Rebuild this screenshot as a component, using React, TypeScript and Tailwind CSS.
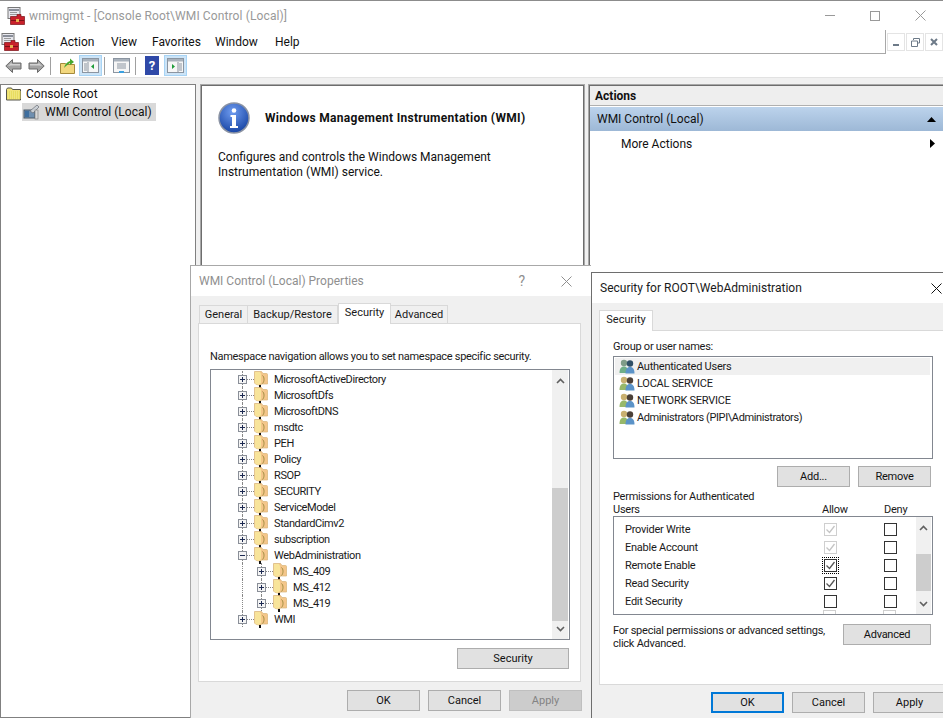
import type { ReactNode } from "react"

const uiFont = "font-['Roboto','Liberation_Sans',sans-serif]"

function AppIcon() {
  return (
    <svg width="18" height="18" viewBox="0 0 18 18" className="shrink-0">
      <rect x="1" y="0.5" width="12" height="11" fill="#e8e8ee" stroke="#777" />
      <rect x="2" y="2" width="10" height="2" fill="#8a8f9a" />
      <rect x="3" y="5" width="7" height="1" fill="#999" />
      <rect x="3" y="7" width="7" height="1" fill="#999" />
      <path d="M7 9.500h3v-2h4v2h3.500v8H3.500v-8z" fill="#c8202a" stroke="#7a1015" strokeWidth="0.7" />
      <rect x="4" y="13" width="13" height="1" fill="#7a1015" />
      <rect x="9" y="12" width="3" height="3" fill="#e8b050" />
    </svg>
  )
}

function ArrowIcon({ flip }: { flip?: boolean }) {
  return (
    <svg width="17" height="16" viewBox="0 0 17 16" className={flip ? "-scale-x-100" : ""}>
      <path d="M0.800 8 7.500 1.500V5H16v6H7.500v3.500z" fill="#a3a3a3" stroke="#6a6a6a" />
      <path d="M3 8 6.500 4.500V6H15v1.500H6z" fill="#d2d2d2" />
    </svg>
  )
}

function ToolButton({ active, children }: { active?: boolean; children: ReactNode }) {
  return (
    <div className={`flex h-[21px] w-[23px] items-center justify-center border ${active ? "border-[#a8d4f5] bg-[#cce4f7]" : "border-transparent"}`}>
      {children}
    </div>
  )
}

function PaneIcon({ side }: { side: "left" | "right" | "list" }) {
  return (
    <svg width="17" height="15" viewBox="0 0 17 15">
      <rect x="0.500" y="0.500" width="16" height="14" fill="#f6f6f6" stroke="#8b95a1" />
      <rect x="1" y="1" width="15" height="2.500" fill="#a9b2bc" />
      {side === "list" ? (
        <>
          <path d="M4 6h9M4 8h9M4 10h9" stroke="#8b95a1" />
          <rect x="6" y="13" width="5" height="2" fill="#3aa0e0" />
        </>
      ) : (
        <>
          <path d={side === "left" ? "M6 4v10" : "M11 4v10"} stroke="#8b95a1" />
          <path d={side === "left" ? "M2 6h3M2 8h3M2 10h3M2 12h3" : "M12 6h3M12 8h3M12 10h3M12 12h3"} stroke="#8b95a1" />
          <path d={side === "left" ? "M12 6v5L9 8.500z" : "M5 6v5l3-2.500z"} fill="#1f9d3a" />
        </>
      )}
    </svg>
  )
}

function Separator() {
  return <div className="h-[18px] w-px shrink-0 bg-[#a0a0a0]" />
}

function NavFolder() {
  return (
    <svg width="16" height="14" viewBox="0 0 16 14" className="shrink-0">
      <path d="M0.500 2.500l1-1.500h4l1 1.500h8v10.500h-14z" fill="#f3e47a" stroke="#55554a" />
      <rect x="1.500" y="4" width="13" height="8" fill="#e8dc60" />
      <path d="M2 5h12M2 7h12M2 9h12M2 11h12" stroke="#f6ef9a" strokeDasharray="1 1" />
    </svg>
  )
}

function WmiIcon() {
  return (
    <svg width="17" height="16" viewBox="0 0 17 16" className="shrink-0">
      <rect x="1" y="6" width="11" height="8" fill="#6f8fb0" stroke="#4a5a6a" />
      <rect x="2" y="7" width="4" height="6" fill="#3f6f9f" />
      <path d="M7 7 14 1l2 2-6 6z" fill="#c9ced4" stroke="#6a6f75" strokeWidth="0.7" />
      <rect x="12" y="6" width="3" height="9" fill="#d8d8d8" stroke="#777" strokeWidth="0.6" />
    </svg>
  )
}

function InfoIcon() {
  return (
    <svg width="32" height="32" viewBox="0 0 32 32" className="shrink-0">
      <defs>
        <radialGradient id="infoFill" cx="45%" cy="30%" r="75%">
          <stop offset="0%" stopColor="#6f9cf0" />
          <stop offset="100%" stopColor="#123f9f" />
        </radialGradient>
      </defs>
      <circle cx="16" cy="16" r="15" fill="url(#infoFill)" stroke="#8b93a3" strokeWidth="1.500" />
      <circle cx="16" cy="8.500" r="2.300" fill="#fff" />
      <path d="M12.500 13h5.500v11h2v2h-8v-2h2v-9h-1.500z" fill="#fff" />
    </svg>
  )
}

function TreeFolder() {
  return (
    <svg width="14" height="17" viewBox="0 0 14 17" className="shrink-0">
      <path d="M0.500 0.500h7l1.500 2h3.500a1 1 0 0 1 1 1V13H7v1H4.500l-3-1-1-1z" fill="#f4c68a" stroke="#d8b478" strokeWidth="0.700" />
      <path d="M1 1h5l1 2v9l-2.500 2L1 12.500z" fill="#f8e49a" />
      <path d="M8.500 4.500c2 1.500 2 6 0 8" stroke="#a08c40" strokeWidth="1" fill="none" />
      <rect x="5" y="14" width="2" height="3" fill="#111" />
    </svg>
  )
}

function ExpandBox({ open }: { open?: boolean }) {
  return (
    <span className="relative flex h-[9px] w-[9px] shrink-0 items-center justify-center border border-[#8a8f98] bg-[#f4f4f4]">
      <span className="absolute h-px w-[5px] bg-[#1d2a52]" />
      {!open && <span className="absolute h-[5px] w-px bg-[#1d2a52]" />}
    </span>
  )
}

function TreeRow({ label, open, depth }: { label: string; open?: boolean; depth?: number }) {
  return (
    <div className={`relative flex h-4 items-center ${depth ? "pl-[46px]" : "pl-[27px]"}`}>
      <span className="absolute left-[31px] top-0 h-4 border-l border-dotted border-[#888]" />
      {depth ? <span className="absolute left-[50px] top-0 h-4 border-l border-dotted border-[#888]" /> : null}
      <div className="relative z-10 flex items-center">
        <ExpandBox open={open} />
        <span className="w-[7px] border-t border-dotted border-[#888]" />
        <TreeFolder />
        <span className="ml-[6px] translate-y-px text-[11px] leading-4 tracking-[-0.4px] text-[#1a1a1a]">{label}</span>
      </div>
    </div>
  )
}

function Users({ green }: { green?: boolean }) {
  return (
    <svg width="16" height="15" viewBox="0 0 16 15" className="shrink-0">
      <circle cx="5" cy="4" r="3.200" fill={green ? "#7f9c88" : "#c9b070"} />
      <path d="M0.500 14c0-5 2-6.500 4.500-6.500S9 9 9 14z" fill={green ? "#6fae88" : "#97b86a"} />
      <circle cx="11" cy="4.500" r="3.200" fill={green ? "#2f4f66" : "#4b4038"} />
      <path d="M6.500 14.500c0-5 2-6.500 4.500-6.500s4.500 1.500 4.500 6.500z" fill="#5b93c8" />
    </svg>
  )
}

function DialogButton({ label, width, disabled, focused }: { label: string; width: string; disabled?: boolean; focused?: boolean }) {
  return (
    <div
      className={`flex h-[21px] shrink-0 items-center justify-center pt-[2px] text-[11px] ${width} ${
        focused
          ? "border-2 border-[#0078d7] bg-[#e1e1e1] text-[#111]"
          : disabled
            ? "border border-[#bfbfbf] bg-[#cccccc] text-[#838383]"
            : "border border-[#adadad] bg-[#e1e1e1] text-[#111]"
      }`}
    >
      {label}
    </div>
  )
}

function ScrollBar({ thumbTop, thumbHeight, width }: { thumbTop: string; thumbHeight: string; width: string }) {
  return (
    <div className={`flex shrink-0 flex-col items-center bg-[#f0f0f0] ${width}`}>
      <svg width="9" height="6" viewBox="0 0 9 6" className="mt-[8px] shrink-0">
        <path d="M1 5 4.500 1.500 8 5" fill="none" stroke="#606060" strokeWidth="1.600" />
      </svg>
      <div className={`w-full bg-[#cdcdcd] ${thumbTop} ${thumbHeight}`} />
      <svg width="9" height="6" viewBox="0 0 9 6" className="mt-auto mb-[7px] shrink-0">
        <path d="M1 1 4.500 4.500 8 1" fill="none" stroke="#606060" strokeWidth="1.600" />
      </svg>
    </div>
  )
}

function Check({ state }: { state: "on" | "off" | "grey" | "focus" }) {
  const grey = state === "grey"
  const box = (
    <span className={`flex h-[13px] w-[13px] items-center justify-center border ${grey ? "border-[#cfcfcf]" : "border-[#333]"} bg-white`}>
      {state !== "off" && (
        <svg width="11" height="9" viewBox="0 0 11 9">
          <path d="M1.500 4.500 4.500 7.500 9.500 1" fill="none" stroke={grey ? "#c4c4c4" : "#555"} strokeWidth="1.300" />
        </svg>
      )}
    </span>
  )
  if (state === "focus") {
    return <span className="flex h-[17px] w-[17px] items-center justify-center border border-dotted border-black">{box}</span>
  }
  return <span className="flex h-[17px] w-[17px] items-center justify-center">{box}</span>
}

const treeRows: { label: string; open?: boolean; depth?: number }[] = [
  { label: "MicrosoftActiveDirectory" },
  { label: "MicrosoftDfs" },
  { label: "MicrosoftDNS" },
  { label: "msdtc" },
  { label: "PEH" },
  { label: "Policy" },
  { label: "RSOP" },
  { label: "SECURITY" },
  { label: "ServiceModel" },
  { label: "StandardCimv2" },
  { label: "subscription" },
  { label: "WebAdministration", open: true },
  { label: "MS_409", depth: 1 },
  { label: "MS_412", depth: 1 },
  { label: "MS_419", depth: 1 },
  { label: "WMI" },
]

const permissions: { label: string; allow: "on" | "off" | "grey" | "focus" }[] = [
  { label: "Provider Write", allow: "grey" },
  { label: "Enable Account", allow: "grey" },
  { label: "Remote Enable", allow: "focus" },
  { label: "Read Security", allow: "on" },
  { label: "Edit Security", allow: "off" },
]

const users = [
  { label: "Authenticated Users", selected: true },
  { label: "LOCAL SERVICE" },
  { label: "NETWORK SERVICE" },
  { label: "Administrators (PIPI\\Administrators)" },
]

function PropertiesDialog() {
  return (
    <div className="absolute left-[190px] top-[265px] flex h-[453px] w-[401px] flex-col border-l border-t border-[#a8a8a8] bg-[#f0f0f0]">
      <div className="flex h-[30px] shrink-0 items-center justify-between bg-white pl-[8px] pr-[19px] text-[12px] text-[#8f8f8f]">
        <span>WMI Control (Local) Properties</span>
        <div className="flex items-center gap-[36px]">
          <span className="text-[14px] leading-none">?</span>
          <svg width="11" height="11" viewBox="0 0 11 11">
            <path d="M0.500 0.500 10.500 10.500M10.500 0.500 0.500 10.500" stroke="#8f8f8f" />
          </svg>
        </div>
      </div>
      <div className="ml-[8px] mt-[7px] flex h-[20px] shrink-0 items-end text-[11px] text-[#1a1a1a]">
        <div className="flex h-[18px] w-[49px] items-center justify-center border border-b-0 border-[#d9d9d9] bg-[#f0f0f0] pt-px">General</div>
        <div className="flex h-[18px] w-[90px] items-center justify-center border border-b-0 border-l-0 border-[#d9d9d9] bg-[#f0f0f0] pt-px">Backup/Restore</div>
        <div className="relative z-10 -mb-px flex h-[21px] w-[53px] items-center justify-center border border-b-0 border-[#d9d9d9] bg-white pb-[2px]">Security</div>
        <div className="flex h-[18px] w-[57px] items-center justify-center border border-b-0 border-l-0 border-[#d9d9d9] bg-[#f0f0f0] pt-px">Advanced</div>
      </div>
      <div className="ml-[7px] flex h-[359px] w-[383px] shrink-0 flex-col border border-[#d9d9d9] bg-white px-[11px]">
        <p className="mt-[25px] h-[16px] text-[11px] leading-4 tracking-[-0.3px] text-[#1a1a1a]">Namespace navigation allows you to set namespace specific security.</p>
        <div className="mt-[4px] flex h-[271px] w-[360px] shrink-0 border border-[#828790] pr-px">
          <div className="flex-1 overflow-hidden pt-px">
            {treeRows.map((row) => (
              <TreeRow key={row.label} {...row} />
            ))}
          </div>
          <ScrollBar width="w-[16px]" thumbTop="mt-[104px]" thumbHeight="h-[133px]" />
        </div>
        <div className="mt-[8px] flex justify-end">
          <DialogButton label="Security" width="w-[112px]" />
        </div>
      </div>
      <div className="mt-[8px] flex gap-[8px] pl-[156px]">
        <DialogButton label="OK" width="w-[73px]" />
        <DialogButton label="Cancel" width="w-[73px]" />
        <DialogButton label="Apply" width="w-[73px]" disabled />
      </div>
    </div>
  )
}

function SecurityDialog() {
  return (
    <div className="absolute left-[591px] top-[272px] flex h-[446px] w-[352px] flex-col border-l border-t border-[#6e6e6e] bg-[#f0f0f0]">
      <div className="flex h-[30px] shrink-0 items-center justify-between bg-white pl-[8px] text-[12px] text-[#1a1a1a]">
        <span>Security for ROOT\WebAdministration</span>
        <svg width="11" height="11" viewBox="0 0 11 11" className="mr-px">
          <path d="M0.500 0.500 10.500 10.500M10.500 0.500 0.500 10.500" stroke="#111" />
        </svg>
      </div>
      <div className="ml-[7px] mt-[7px] flex h-[20px] shrink-0 items-end text-[11px] text-[#1a1a1a]">
        <div className="relative z-10 -mb-px flex h-[21px] w-[54px] items-center justify-center border border-b-0 border-[#d9d9d9] bg-white pb-px">Security</div>
      </div>
      <div className="ml-[7px] flex h-[355px] shrink-0 flex-col border-l border-t border-b border-[#d9d9d9] bg-white pl-[13px] pr-[10px] text-[11px] tracking-[-0.25px] text-[#1a1a1a]">
        <p className="mt-[8px] h-[16px] leading-4">Group or user names:</p>
        <div className="mt-px flex h-[103px] flex-col border border-[#828790] pl-px pr-[2px] pt-px">
          {users.map((user) => (
            <div key={user.label} className={`flex h-[17px] items-center pl-[4px] ${user.selected ? "bg-[#f0f0f0]" : ""}`}>
              <Users green={user.selected} />
              <span className={`ml-[2px] leading-4 ${user.label.startsWith("Admin") ? "tracking-[-0.4px]" : ""}`}>{user.label}</span>
            </div>
          ))}
        </div>
        <div className="mt-[7px] flex justify-end gap-[8px] pr-[2px]">
          <DialogButton label="Add..." width="w-[73px]" />
          <DialogButton label="Remove" width="w-[73px]" />
        </div>
        <div className="mt-[2px] flex h-[27px] items-end">
          <p className="w-[150px] leading-[13px]">Permissions for Authenticated Users</p>
          <span className="ml-[59px] w-[62px] leading-[13px]">Allow</span>
          <span className="leading-[13px]">Deny</span>
        </div>
        <div className="flex h-[99px] overflow-hidden border border-[#828790] pr-px">
          <div className="flex-1 overflow-hidden pt-[3px]">
            {permissions.map((row) => (
              <div key={row.label} className="flex h-[18px] items-center pl-[11px]">
                <span className="w-[197px] translate-y-px leading-4">{row.label}</span>
                <Check state={row.allow} />
                <span className="ml-[43px]"><Check state="off" /></span>
              </div>
            ))}
            <div className="flex h-[5px] pl-[209px]">
              <span className="h-[13px] w-[13px] border border-[#cfcfcf]" />
              <span className="ml-[47px] h-[13px] w-[13px] border border-[#cfcfcf]" />
            </div>
          </div>
          <ScrollBar width="w-[15px]" thumbTop="mt-[23px]" thumbHeight="h-[37px]" />
        </div>
        <div className="mt-[9px] flex items-start justify-between pr-[2px]">
          <p className="w-[225px] leading-[13px]">For special permissions or advanced settings, click Advanced.</p>
          <DialogButton label="Advanced" width="w-[88px]" />
        </div>
      </div>
      <div className="mt-[7px] flex pl-[119px]">
        <DialogButton label="OK" width="w-[73px]" focused />
        <span className="ml-[8px] shrink-0"><DialogButton label="Cancel" width="w-[73px]" /></span>
        <span className="ml-[8px] shrink-0"><DialogButton label="Apply" width="w-[73px]" /></span>
      </div>
    </div>
  )
}

export default function App() {
  return (
    <div className={`relative h-[718px] w-[943px] overflow-hidden bg-[#f0f0f0] ${uiFont}`}>
      <div className="flex h-full flex-col">
        {/* title bar */}
        <div className="flex h-[30px] shrink-0 items-center border-t border-[#8c8c8c] bg-white pl-[7px] pr-[17px] text-[12px] text-[#999]">
          <AppIcon />
          <span className="ml-[4px] tracking-[0.12px]">wmimgmt - [Console Root\WMI Control (Local)]</span>
          <div className="ml-auto flex items-center gap-[35px]">
            <span className="h-px w-[10px] bg-[#999]" />
            <span className="h-[10px] w-[10px] border border-[#999]" />
            <svg width="11" height="11" viewBox="0 0 11 11">
              <path d="M0.500 0.500 10.500 10.500M10.500 0.500 0.500 10.500" stroke="#999" />
            </svg>
          </div>
        </div>
        {/* menu bar */}
        <div className="flex h-[24px] shrink-0 bg-white text-[12px] text-[#111]">
          <div className="flex flex-1 items-center border-b border-r border-[#a8a8a8] pl-[1px]">
            <AppIcon />
            <span className="ml-[7px] w-[34px]">File</span>
            <span className="w-[51px]">Action</span>
            <span className="w-[41px]">View</span>
            <span className="w-[63px]">Favorites</span>
            <span className="w-[60px]">Window</span>
            <span>Help</span>
          </div>
          <div className="flex w-[57px] items-start gap-px pl-px pt-[3px]">
            <span className="flex h-[18px] w-[18px] items-center justify-center border border-[#e4e4e4]">
              <span className="mt-[6px] h-[2px] w-[6px] bg-[#6d7a88]" />
            </span>
            <span className="flex h-[18px] w-[18px] items-center justify-center border border-[#e4e4e4]">
              <svg width="9" height="9" viewBox="0 0 9 9">
                <path d="M2.500 2V0.500H8.500V5H7M0.500 3H6.500V8.500H0.500z" fill="none" stroke="#6d7a88" />
              </svg>
            </span>
            <span className="flex h-[18px] w-[18px] items-center justify-center border border-[#e4e4e4]">
              <svg width="8" height="8" viewBox="0 0 8 8">
                <path d="M1 1 7 7M7 1 1 7" stroke="#6d7a88" strokeWidth="2" />
              </svg>
            </span>
          </div>
        </div>
        {/* toolbar */}
        <div className="flex h-[23px] shrink-0 items-center bg-white pl-[5px]">
          <ArrowIcon />
          <span className="ml-[6px]"><ArrowIcon flip /></span>
          <span className="ml-[5px]"><Separator /></span>
          <span className="ml-[9px] mr-[4px]">
            <svg width="15" height="17" viewBox="0 0 15 17">
              <path d="M0.500 6.500h5l1 1h8v9h-14z" fill="#f2d77e" stroke="#a58a3c" />
              <path d="M4 11c1-4 3-6 6-7V1.500l4 3.500-4 3V6c-2 1-4 3-6 5z" fill="#45a82e" />
            </svg>
          </span>
          <ToolButton active><PaneIcon side="left" /></ToolButton>
          <span className="ml-[2px]"><Separator /></span>
          <span className="ml-[8px] mr-[5px]"><PaneIcon side="list" /></span>
          <Separator />
          <span className="ml-[9px] mr-[5px] flex h-[19px] w-[14px] items-center justify-center bg-[#2f49a8] text-[13px] font-bold leading-none text-white">?</span>
          <ToolButton active><PaneIcon side="right" /></ToolButton>
        </div>
        <div className="h-[7px] shrink-0 border-t border-[#e2e2e2] bg-[#f0f0f0]" />
        {/* panes */}
        <div className="flex min-h-0 flex-1 bg-[#f0f0f0]">
          <div className="w-[196px] border border-[#808080] bg-white pl-[5px] text-[12px] text-[#111]">
            <div className="flex h-[18px] items-center">
              <NavFolder />
              <span className="ml-[4px]">Console Root</span>
            </div>
            <div className="ml-[16px] flex h-[18px] w-[134px] items-center bg-[#d9d9d9] pl-[1px]">
              <WmiIcon />
              <span className="ml-[5px]">WMI Control (Local)</span>
            </div>
          </div>
          <div className="ml-[4px] w-[385px] border-l border-r border-t border-[#a8a8a8] bg-white pl-[17px] pt-[17px] text-[12px] text-[#111] shadow-[inset_1px_1px_0_#6d6d6d,inset_-1px_0_0_#6d6d6d]">
            <div className="flex items-center">
              <InfoIcon />
              <span className="ml-[15px] font-bold tracking-[0.3px]">Windows Management Instrumentation (WMI)</span>
            </div>
            <p className="mt-[16px] w-[300px] leading-[15px]">Configures and controls the Windows Management Instrumentation (WMI) service.</p>
          </div>
          <div className="ml-[3px] flex flex-1 flex-col border-l border-t border-[#a8a8a8] bg-white pl-px pt-px text-[12px] text-[#111] shadow-[inset_1px_1px_0_#6d6d6d]">
            <div className="flex h-[20px] items-center border-b border-[#b0b0b0] bg-[#eeeeee] pl-[5px] font-bold">Actions</div>
            <div className="mt-px flex h-[24px] items-center justify-between bg-gradient-to-b from-[#bcd3ec] to-[#9db8d6] pl-[7px] pr-[7px]">
              <span>WMI Control (Local)</span>
              <svg width="9" height="5" viewBox="0 0 9 5"><path d="M4.500 0 9 5H0z" fill="#000" /></svg>
            </div>
            <div className="flex h-[24px] items-center justify-between pl-[31px] pr-[8px] pt-px">
              <span>More Actions</span>
              <svg width="5" height="9" viewBox="0 0 5 9"><path d="M0 0 5 4.500 0 9z" fill="#000" /></svg>
            </div>
          </div>
        </div>
      </div>
      <PropertiesDialog />
      <SecurityDialog />
    </div>
  )
}
